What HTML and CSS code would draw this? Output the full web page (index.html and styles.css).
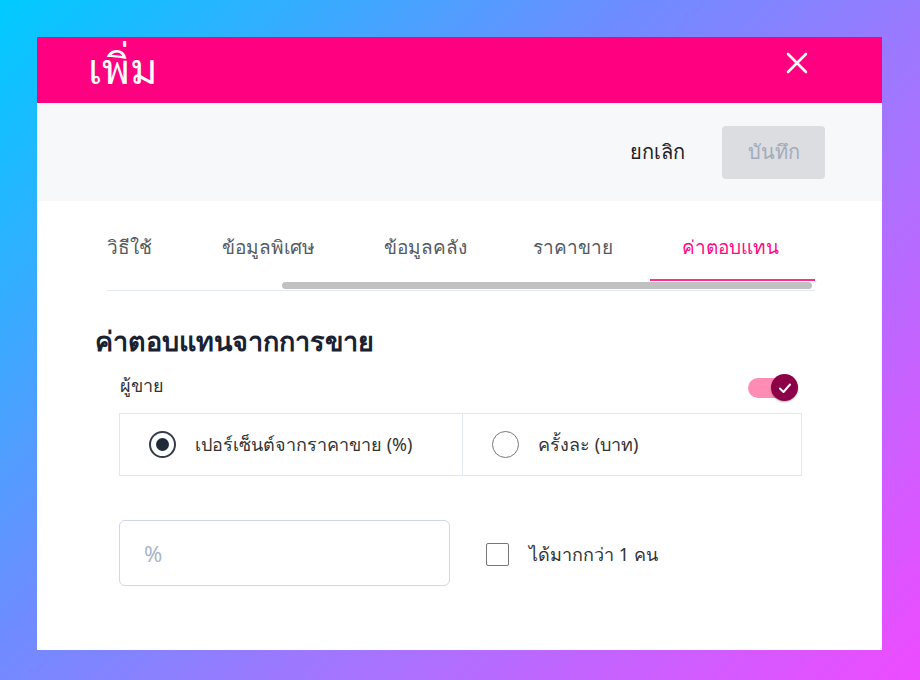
FILE: index.html
```html
<!DOCTYPE html>
<html lang="th">
<head>
<meta charset="utf-8">
<link rel="stylesheet" href="styles.css">
</head>
<body>
<div class="modal">
  <div class="modal-header">
    <h1 class="modal-title">เพิ่ม</h1>
    <button class="close-btn" aria-label="close">
      <svg width="22" height="22" viewBox="0 0 22 22"><path d="M2 2 L20 20 M20 2 L2 20" stroke="#fff" stroke-width="2.6" stroke-linecap="round" fill="none"/></svg>
    </button>
  </div>
  <div class="toolbar">
    <button class="btn-cancel">ยกเลิก</button>
    <button class="btn-save" disabled>บันทึก</button>
  </div>
  <div class="content">
    <div class="tabs-wrap">
      <div class="tabs">
        <div class="tab">วิธีใช้</div>
        <div class="tab">ข้อมูลพิเศษ</div>
        <div class="tab">ข้อมูลคลัง</div>
        <div class="tab">ราคาขาย</div>
        <div class="tab active">ค่าตอบแทน</div>
      </div>
      <div class="scrollbar"><div class="scroll-thumb"></div></div>
    </div>
    <h2 class="section-title">ค่าตอบแทนจากการขาย</h2>
    <div class="seller-row">
      <span class="seller-label">ผู้ขาย</span>
      <div class="toggle">
        <span class="toggle-knob">
          <svg width="16" height="16" viewBox="0 0 16 16"><path d="M3 8.5 L6.5 12 L13 4.5" stroke="#fff" stroke-width="2" fill="none" stroke-linecap="round" stroke-linejoin="round"/></svg>
        </span>
      </div>
    </div>
    <div class="radio-group">
      <label class="radio-opt"><span class="radio checked"></span><span>เปอร์เซ็นต์จากราคาขาย (%)</span></label>
      <label class="radio-opt"><span class="radio"></span><span>ครั้งละ (บาท)</span></label>
    </div>
    <div class="amount-row">
      <div class="amount-input">%</div>
      <label class="check-opt"><span class="checkbox"></span><span>ได้มากกว่า 1 คน</span></label>
    </div>
  </div>
</div>
</body>
</html>
```
FILE: styles.css
```css
* { box-sizing: border-box; }
html, body { margin: 0; padding: 0; }
body {
  width: 920px;
  height: 680px;
  padding: 37px 38px 30px 37px;
  background: linear-gradient(135deg, #00cbff 0%, #6f8cff 40%, #a873ff 65%, #ee4bff 100%);
  font-family: "Noto Sans", "Liberation Sans", sans-serif;
  overflow: hidden;
}
.modal {
  width: 845px;
  height: 613px;
  background: #fff;
  display: flex;
  flex-direction: column;
}
.modal-header {
  height: 66px;
  background: #ff0080;
  display: flex;
  align-items: center;
  justify-content: space-between;
  padding: 0 74px 0 51px;
}
.modal-title {
  margin: 0;
  color: #fff;
  font-family: "Liberation Serif", serif;
  font-weight: normal;
  font-size: 42px;
  line-height: 1;
  margin-top: 0;
}
.close-btn {
  background: none;
  border: 0;
  padding: 0;
  width: 22px;
  height: 22px;
  margin-top: -14px;
  display: flex;
}
.toolbar {
  height: 98px;
  background: #f7f8fa;
  display: flex;
  align-items: center;
  justify-content: flex-end;
  padding-right: 57px;
  gap: 37px;
}
.btn-cancel {
  background: none;
  border: 0;
  padding: 0;
  font-family: inherit;
  font-size: 20px;
  color: #222;
}
.btn-save {
  width: 103px;
  height: 53px;
  border: 0;
  border-radius: 4px;
  background: #dcdde0;
  color: #a2abbb;
  font-family: inherit;
  font-size: 20px;
}
.content {
  padding: 20px 67px 0 70px;
  display: flex;
  flex-direction: column;
}
.tabs-wrap {
  border-bottom: 1px solid #e4e8ef;
}
.tabs {
  display: grid;
  grid-template-columns: 115px 162px 149px 117px 165px;
}
.tab {
  padding: 13px 0 19px;
  font-size: 19px;
  line-height: 26px;
  color: #555a62;
  border-bottom: 2px solid transparent;
  white-space: nowrap;
}
.tab.active {
  text-align: center;
  padding-right: 4px;
  color: #ff0a84;
  border-bottom-color: #ff2d8f;
}
.scrollbar {
  height: 9px;
  padding-top: 1px;
  padding-left: 175px;
  padding-right: 3px;
}
.scroll-thumb {
  height: 7px;
  border-radius: 4px;
  background: #c1c1c1;
}
.section-title {
  margin: 32px 0 0 -12px;
  font-size: 27px;
  font-weight: bold;
  line-height: 36px;
  color: #1a2130;
}
.seller-row {
  display: flex;
  align-items: center;
  justify-content: space-between;
  margin: 12px 17px 0 13px;
  height: 28px;
}
.seller-label { font-size: 18px; color: #333; }
.toggle {
  width: 50px;
  height: 20px;
  border-radius: 10px;
  background: #ff8cb4;
  position: relative;
  margin-top: 6px;
}
.toggle-knob {
  position: absolute;
  right: 0;
  top: -4px;
  width: 27px;
  height: 27px;
  border-radius: 50%;
  background: #8c0047;
  display: flex;
  align-items: center;
  justify-content: center;
  box-shadow: 0 1px 2px rgba(0,0,0,0.3);
}
.radio-group {
  margin: 14px 13px 0 12px;
  height: 63px;
  border: 1px solid #e2e6ed;
  display: grid;
  grid-template-columns: 342px 1fr;
}
.radio-opt {
  display: flex;
  align-items: center;
  gap: 19px;
  padding-left: 29px;
  font-size: 18px;
  color: #333;
}
.radio-opt + .radio-opt { border-left: 1px solid #e2e6ed; padding-left: 29px; }
.radio {
  width: 27px;
  height: 27px;
  border-radius: 50%;
  border: 1.5px solid #777;
  display: flex;
  align-items: center;
  justify-content: center;
  background: #fff;
}
.radio.checked { border: 2px solid #333c4a; }
.radio.checked::after {
  content: "";
  width: 13px;
  height: 13px;
  border-radius: 50%;
  background: #1f2a3a;
}
.amount-row {
  display: flex;
  align-items: center;
  margin: 44px 0 0 12px;
  gap: 36px;
}
.amount-input {
  width: 331px;
  height: 66px;
  border: 1px solid #cfd8e6;
  border-radius: 6px;
  display: flex;
  align-items: center;
  padding-left: 24px;
  font-size: 22px;
  color: #a9b4c6;
}
.check-opt {
  display: flex;
  align-items: center;
  gap: 20px;
  font-size: 18px;
  color: #333;
  margin-top: 2px;
}
.checkbox {
  width: 23px;
  height: 23px;
  border: 1.5px solid #777;
  border-radius: 2px;
}
```
